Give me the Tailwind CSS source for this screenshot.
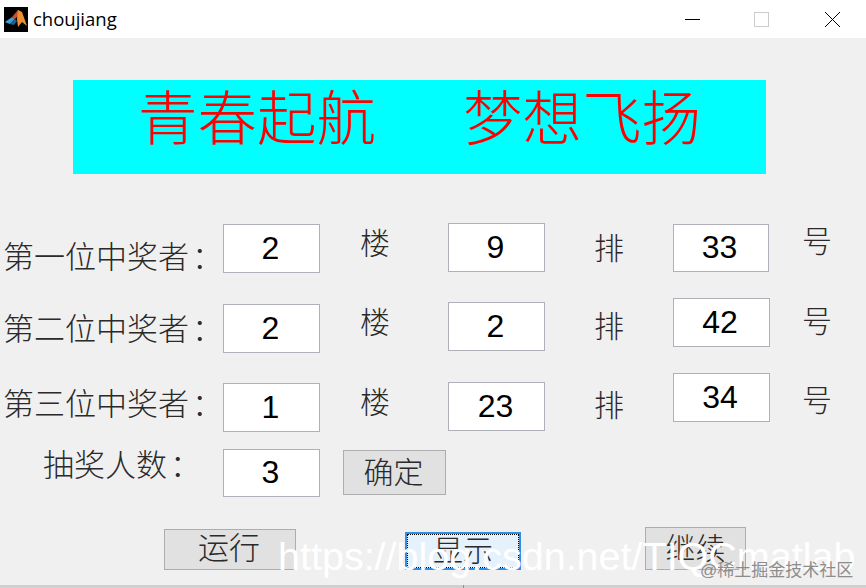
<!DOCTYPE html>
<html lang="zh-CN">
<head>
  <meta charset="UTF-8">
  <title>choujiang</title>
  <script src="https://cdn.jsdelivr.net/npm/@tailwindcss/browser@4"></script>
</head>
<body class="bg-[#f0f0f0] overflow-hidden">
  <div class="relative w-[866px] h-[588px] overflow-hidden text-[#2a2a2a] text-[30px] leading-[30px] font-['Liberation_Serif','Noto_Sans_CJK_SC',serif] font-light">
    <!-- Title bar -->
    <header class="h-[38px] bg-white flex items-center">
      <svg class="ml-1 w-6 h-[25px]" viewBox="0 0 24 25">
        <rect width="24" height="25" fill="#000"/>
        <path d="M1 15 L8 10 L11 12 L6 17 L3 16Z" fill="#3f9fd0"/>
        <path d="M8 10 L14 3 L17 6 L11 12Z" fill="#c8502a"/>
        <path d="M14 3 L18 5 L23 19 L18 15 L14 20 L13 12Z" fill="#ee9030"/>
        <path d="M6 17 L11 12 L13 14 L10 18Z" fill="#1f5f8f"/>
      </svg>
      <span class="ml-[5px] text-[18.5px] leading-none text-black font-normal font-['Open_Sans',sans-serif]">choujiang</span>
      <div class="ml-auto flex items-center">
        <div class="w-[15px] h-px bg-black mr-[54px]"></div>
        <div class="w-[15px] h-[15px] border border-[#cccccc] mr-[56px]"></div>
        <svg class="w-[15px] h-[15px] mr-[26px]" viewBox="0 0 15 15"><path d="M0 0 L15 15 M15 0 L0 15" stroke="#000" stroke-width="1" fill="none"/></svg>
      </div>
    </header>

    <!-- Banner -->
    <div class="ml-[73px] mt-[42px] w-[693px] h-[94px] bg-[#00ffff] text-[#ff0000] text-[59.5px] leading-[80px] flex justify-center gap-[87px]">
      <span>青春起航</span>
      <span>梦想飞扬</span>
    </div>

    <!-- Winner rows -->
    <div class="mt-[49px]">
      <div class="h-[75px] flex items-start">
        <span class="w-[223px] pl-[3px] mt-[20px] text-[31px] whitespace-nowrap">第一位中奖者<span class="ml-[3px]">：</span></span>
        <div class="w-[97px] h-[49px] mt-[1px] pb-[2px] pr-[2px] bg-white border border-[#b0b0b8] text-black text-[32px] font-normal font-['Liberation_Sans',sans-serif] flex items-center justify-center">2</div>
        <span class="ml-[40px] w-[88px] mt-[6px]">楼</span>
        <div class="w-[97px] h-[49px] pb-[2px] pr-[2px] bg-white border border-[#b0b0b8] text-black text-[32px] font-normal font-['Liberation_Sans',sans-serif] flex items-center justify-center">9</div>
        <span class="ml-[49px] w-[79px] mt-[11px]">排</span>
        <div class="w-[96px] h-[48px] mt-[1px] pb-[2px] pr-[3px] bg-white border border-[#b0b0b8] text-black text-[32px] font-normal font-['Liberation_Sans',sans-serif] flex items-center justify-center">33</div>
        <span class="ml-[33px] mt-[4px]">号</span>
      </div>
      <div class="h-[75px] flex items-start">
        <span class="w-[223px] pl-[3px] mt-[17px] text-[31px] whitespace-nowrap">第二位中奖者<span class="ml-[3px]">：</span></span>
        <div class="w-[97px] h-[49px] mt-[6px] pb-[2px] pr-[2px] bg-white border border-[#b0b0b8] text-black text-[32px] font-normal font-['Liberation_Sans',sans-serif] flex items-center justify-center">2</div>
        <span class="ml-[40px] w-[88px] mt-[10px]">楼</span>
        <div class="w-[97px] h-[49px] mt-[4px] pb-[2px] pr-[2px] bg-white border border-[#b0b0b8] text-black text-[32px] font-normal font-['Liberation_Sans',sans-serif] flex items-center justify-center">2</div>
        <span class="ml-[49px] w-[79px] mt-[14px]">排</span>
        <div class="w-[97px] h-[49px] pb-[2px] pr-[3px] bg-white border border-[#b0b0b8] text-black text-[32px] font-normal font-['Liberation_Sans',sans-serif] flex items-center justify-center">42</div>
        <span class="ml-[32px] mt-[9px]">号</span>
      </div>
      <div class="h-[76px] flex items-start">
        <span class="w-[223px] pl-[3px] mt-[17px] text-[31px] whitespace-nowrap">第三位中奖者<span class="ml-[3px]">：</span></span>
        <div class="w-[97px] h-[49px] mt-[10px] pb-[2px] pr-[2px] bg-white border border-[#b0b0b8] text-black text-[32px] font-normal font-['Liberation_Sans',sans-serif] flex items-center justify-center">1</div>
        <span class="ml-[40px] w-[88px] mt-[15px]">楼</span>
        <div class="w-[97px] h-[49px] mt-[9px] pb-[2px] pr-[2px] bg-white border border-[#b0b0b8] text-black text-[32px] font-normal font-['Liberation_Sans',sans-serif] flex items-center justify-center">23</div>
        <span class="ml-[49px] w-[79px] mt-[18px]">排</span>
        <div class="w-[97px] h-[49px] pb-[2px] pr-[3px] bg-white border border-[#b0b0b8] text-black text-[32px] font-normal font-['Liberation_Sans',sans-serif] flex items-center justify-center">34</div>
        <span class="ml-[32px] mt-[13px]">号</span>
      </div>
      <div class="h-[78px] flex items-start">
        <span class="w-[223px] pl-[43px] mt-[2px] text-[31px] whitespace-nowrap">抽奖人数<span class="ml-[3px]">：</span></span>
        <div class="w-[97px] h-[48px] pb-[2px] pr-[2px] bg-white border border-[#b0b0b8] text-black text-[32px] font-normal font-['Liberation_Sans',sans-serif] flex items-center justify-center">3</div>
        <button class="ml-[23px] w-[103px] h-[45px] mt-[1px] pr-[2px] bg-[#e1e1e1] border border-[#adadad]">确定</button>
      </div>
      <!-- Bottom buttons -->
      <div class="flex items-start">
        <button class="ml-[164px] w-[132px] h-[41px] mt-[2px] pb-[2px] pr-[2px] text-[31px] bg-[#e1e1e1] border border-[#adadad]">运行</button>
        <button class="ml-[109px] w-[116px] h-[38px] mt-[5px] bg-[#e5f1fb] border-2 border-[#2f8fe6] outline-dotted outline-1 outline-black -outline-offset-3">显示</button>
        <button class="ml-[124px] w-[101px] h-[43px] bg-[#e1e1e1] border border-[#adadad]">继续</button>
      </div>
    </div>

    <!-- Bottom edge -->
    <div class="absolute left-0 right-0 bottom-0 h-[3px] bg-[#d0d0d0]"></div>
    <div class="absolute left-[463px] bottom-0 w-px h-[3px] bg-[#909090]"></div>

    <!-- Watermarks -->
    <span class="absolute left-[278px] top-[531px] text-white text-[39.5px] leading-[50px] font-normal font-['Liberation_Sans',sans-serif] whitespace-nowrap">https://blog.csdn.net/TIQCmatlab</span>
    <span class="absolute left-[700px] top-[561px] text-[#8c8c8c] text-[17px] leading-[20px] font-normal font-['Liberation_Sans','Noto_Sans_CJK_SC',sans-serif] whitespace-nowrap">@稀土掘金技术社区</span>
  </div>
</body>
</html>
